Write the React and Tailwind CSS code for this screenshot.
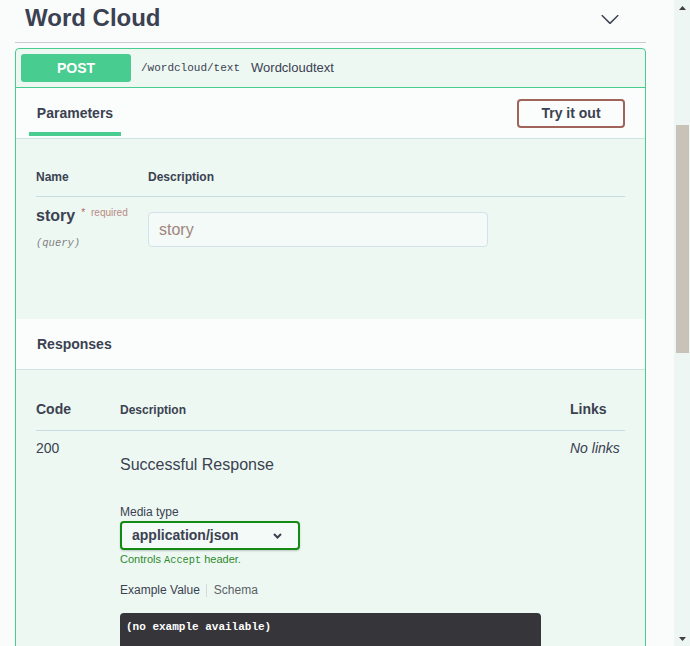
export default function App() {
  return (
    <div className="w-[690px] h-[646px] overflow-hidden flex bg-[#fafcfb] text-[#3b4151] font-['Liberation_Sans',Arial,sans-serif]">
      <div className="w-[674px] shrink-0 flex flex-col">
        {/* Tag header */}
        <div className="ml-[15px] w-[631px] h-[43px] shrink-0 border-b border-[#c9cbd0] flex items-start justify-between pl-[10px]">
          <h3 className="text-[24px] font-bold leading-[30px] mt-[3px]">Word Cloud</h3>
          <svg width="20" height="20" viewBox="0 0 20 20" className="mt-[9px] mr-[26px]" fill="#3b4151">
            <path d="M17.418 6.109c.272-.268.709-.268.979 0s.271.701 0 .969l-7.908 7.83c-.27.268-.707.268-.979 0l-7.908-7.83c-.27-.268-.27-.701 0-.969.271-.268.709-.268.979 0L10 13.25l7.418-7.141z" />
          </svg>
        </div>

        {/* Opblock */}
        <div className="mt-[5px] ml-[15px] w-[631px] border border-[#49cc90] rounded-[4px] bg-[#edf8f3] flex flex-col">
          {/* Summary */}
          <div className="flex items-center pt-[5px] pb-[5px] pl-[5px] border-b border-[#49cc90]">
            <div className="w-[110px] h-[28px] rounded-[3px] bg-[#49cc90] text-white text-[14px] font-bold flex items-center justify-center">
              POST
            </div>
            <span className="ml-[10px] font-['Liberation_Mono',monospace] text-[11px] text-[#3b4151]">/wordcloud/text</span>
            <span className="ml-[11px] text-[13px] text-[#3b4151]">Wordcloudtext</span>
          </div>

          {/* Parameters header */}
          <div className="h-[51px] bg-[#fafdfc] border-b border-[#cfe3e6] flex items-stretch justify-between pl-[13px] pr-[20px]">
            <div className="w-[92px] flex flex-col items-center justify-end pb-[2px]">
              <span className="text-[14px] font-bold leading-[17px] mb-[10px]">Parameters</span>
              <div className="w-full h-[4px] bg-[#49cc90]" />
            </div>
            <button className="self-center h-[29px] w-[108px] border-2 border-[#a0645a] rounded-[4px] text-[14px] font-bold text-[#3b4151] bg-transparent">
              Try it out
            </button>
          </div>

          {/* Parameters body */}
          <div className="h-[180px] px-[20px] pt-[20px]">
            <div className="flex pt-[11px] pb-[11px] border-b border-[#c6dce2] text-[12px] font-bold leading-[15px]">
              <div className="w-[112px]">Name</div>
              <div>Description</div>
            </div>
            <div className="flex pt-[10px]">
              <div className="w-[112px] flex flex-col">
                <div className="flex items-start">
                  <span className="text-[16px] font-bold leading-[18px]">story</span>
                  <span className="ml-[6px] text-[10px] leading-[12px] text-[#b0665c]">*</span>
                  <span className="ml-[6px] text-[10px] leading-[12px] text-[#b98a82]">required</span>
                </div>
                <span className="mt-[11px] font-['Liberation_Mono',monospace] italic text-[10.5px] leading-[15px] text-[#7f7f7f]">(query)</span>
              </div>
              <div className="pt-[5px]">
                <input
                  placeholder="story"
                  className="w-[340px] h-[35px] border border-[#d3e2e9] rounded-[4px] bg-[#f3faf7] px-[10px] text-[16px] outline-none placeholder:text-[#a0847d] font-['Liberation_Sans',Arial,sans-serif]"
                />
              </div>
            </div>
          </div>

          {/* Responses header */}
          <div className="h-[51px] bg-[#fafdfc] border-b border-[#cfe3e6] flex items-center pl-[21px]">
            <span className="text-[14px] font-bold leading-[17px]">Responses</span>
          </div>

          {/* Responses body */}
          <div className="px-[20px] pt-[20px] pb-[20px]">
            <div className="flex items-baseline pt-[11px] pb-[11px] border-b border-[#c6dce2] font-bold leading-[17px]">
              <div className="w-[84px] text-[14px]">Code</div>
              <div className="flex-1 text-[12px]">Description</div>
              <div className="w-[55px] text-[14px]">Links</div>
            </div>
            <div className="flex items-start pt-[9px]">
              <div className="w-[84px] text-[14px] leading-[17px]">200</div>
              <div className="flex-1 flex flex-col items-start">
                <div className="mt-[16px] text-[16px] leading-[18px]">Successful Response</div>
                <div className="mt-[31px] text-[12px] leading-[15px]">Media type</div>
                <div className="mt-[1px] w-[180px] h-[29px] border-2 border-[#138a13] rounded-[4px] bg-[#f3faf7] shadow-[0_1px_2px_rgba(0,0,0,0.2)] flex items-center justify-between pl-[10px] pr-[16px]">
                  <span className="text-[14px] font-bold leading-[17px]">application/json</span>
                  <svg width="9" height="6" viewBox="0 0 9 6" fill="none" stroke="#3b4151" strokeWidth="2">
                    <path d="M1 1l3.5 3.5L8 1" />
                  </svg>
                </div>
                <div className="mt-[3px] text-[11px] leading-[13px] text-[#2e8a2e]">
                  Controls <span className="font-['Liberation_Mono',monospace] text-[10.3px]">Accept</span> header.
                </div>
                <div className="mt-[16px] flex items-center text-[12px] leading-[15px]">
                  <span className="pr-[6px] text-[#3b4151]">Example Value</span>
                  <span className="w-px h-[13px] bg-[#d6d9dc]" />
                  <span className="pl-[7px] text-[#5b5f66]">Schema</span>
                </div>
                <div className="mt-[15px] w-[421px] h-[60px] bg-[#36353a] rounded-[4px] pl-[6px] pt-[7px] font-['Liberation_Mono',monospace] font-bold text-[11px] leading-[15px] text-white">
                  (no example available)
                </div>
              </div>
              <div className="w-[55px] text-[14px] leading-[17px] italic">No links</div>
            </div>
          </div>
        </div>
      </div>

      {/* Scrollbar */}
      <div className="w-[16px] shrink-0 h-full bg-[#edf6f2] flex flex-col items-center pt-[6px] pb-[5px]">
        <svg width="7" height="4" viewBox="0 0 7 4" className="shrink-0">
          <polygon points="3.5,0 7,4 0,4" fill="#404040" />
        </svg>
        <div className="mt-[115px] self-start ml-[2px] w-[13px] h-[228px] bg-[#c8c2b8] shrink-0" />
        <div className="flex-1" />
        <svg width="7" height="4" viewBox="0 0 7 4" className="shrink-0">
          <polygon points="0,0 7,0 3.5,4" fill="#404040" />
        </svg>
      </div>
    </div>
  );
}
